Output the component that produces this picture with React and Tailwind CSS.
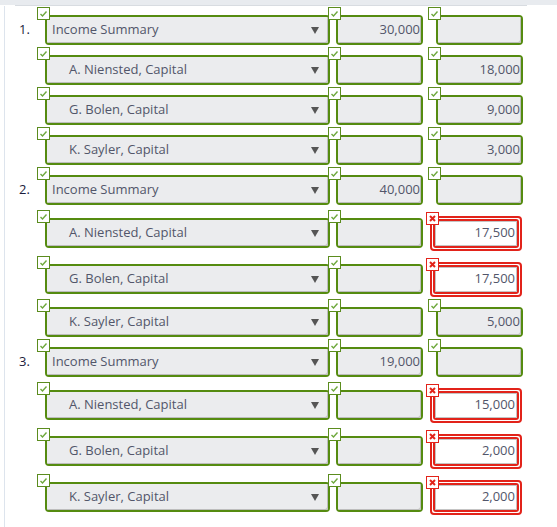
import React from 'react'

const rows = [
  { n: '1.', acct: 'Income Summary', dr: '30,000', cr: '' },
  { n: '', acct: 'A. Niensted, Capital', dr: '', cr: '18,000' },
  { n: '', acct: 'G. Bolen, Capital', dr: '', cr: '9,000' },
  { n: '', acct: 'K. Sayler, Capital', dr: '', cr: '3,000' },
  { n: '2.', acct: 'Income Summary', dr: '40,000', cr: '' },
  { n: '', acct: 'A. Niensted, Capital', dr: '', cr: '17,500', bad: true },
  { n: '', acct: 'G. Bolen, Capital', dr: '', cr: '17,500', bad: true },
  { n: '', acct: 'K. Sayler, Capital', dr: '', cr: '5,000' },
  { n: '3.', acct: 'Income Summary', dr: '19,000', cr: '' },
  { n: '', acct: 'A. Niensted, Capital', dr: '', cr: '15,000', bad: true },
  { n: '', acct: 'G. Bolen, Capital', dr: '', cr: '2,000', bad: true },
  { n: '', acct: 'K. Sayler, Capital', dr: '', cr: '2,000', bad: true },
]

function Ok({ className }) {
  return (
    <div className={`absolute z-10 w-[13px] h-[13px] border border-[#5b8c1e] bg-white ${className}`}>
      <svg width="11" height="11" viewBox="0 0 11 11" className="block">
        <polyline points="2.5,6 4.5,8 8.5,3.5" fill="none" stroke="#6ea83c" strokeWidth="1.4" />
      </svg>
    </div>
  )
}

function Bad({ className }) {
  return (
    <div className={`absolute z-10 w-[13px] h-[13px] border border-[#e2231a] bg-white ${className}`}>
      <svg width="11" height="11" viewBox="0 0 11 11" className="block">
        <path d="M3 3 L8 8 M8 3 L3 8" stroke="#e2231a" strokeWidth="2" />
      </svg>
    </div>
  )
}

function Box({ width, children, className = '' }) {
  return (
    <div className={`relative h-[30px] rounded-[4px] border-2 border-[#558b10] ${width} ${className}`}>
      <Ok className="-left-[10px] -top-[10px]" />
      <div className="h-full rounded-[2px] bg-[#ebecee] shadow-[inset_-1px_-1px_0_#bdbdbd] flex items-center">
        {children}
      </div>
    </div>
  )
}

function Wrong({ value }) {
  return (
    <div className="relative w-[92px] h-[35px] rounded-[4px] border-2 border-[#e2231a] bg-white p-px">
      <Bad className="-left-[6px] -top-[6px]" />
      <div className="h-full rounded-[3px] border-2 border-[#e2231a]">
        <div className="h-full border border-[#c4c4c4] bg-white flex items-center justify-end pr-[1px]">
          {value}
        </div>
      </div>
    </div>
  )
}

export default function App() {
  return (
    <div className="w-[557px] h-[527px] overflow-hidden bg-white relative text-[13px] text-[#52566a]" style={{ fontFamily: '"Open Sans", sans-serif' }}>
      <div className="h-[5px] bg-[#e8ebef]" />
      <div className="h-px w-[512px] ml-[15px] bg-[#d8dce1]" />
      <div className="ml-[4px] border-l border-[#dde4ed] h-full pt-[4px]">
        {rows.map((r, i) => (
          <div key={i} className={`flex items-center pl-[14px] ${r.bad ? 'h-[46px]' : 'h-[40px]'}`}>
            <div className="w-[26px] text-[#1c1c3c]">{r.n}</div>
            <Box width="w-[285px]">
              <span className={`flex-1 ${r.n ? 'pl-[5px]' : 'pl-[22px]'}`}>{r.acct}</span>
              <svg width="8" height="7" viewBox="0 0 8 7" className="mr-[9px]">
                <path d="M0 0 H8 L4 7 Z" fill="#555" />
              </svg>
            </Box>
            <Box width="w-[87px]" className="ml-[6px]">
              <span className="flex-1 text-right pr-[1px]">{r.dr}</span>
            </Box>
            <div className="ml-[7px] w-[93px]">
              {r.bad ? (
                <Wrong value={r.cr} />
              ) : (
                <Box width="w-[87px]" className="ml-[6px]">
                  <span className="flex-1 text-right pr-[1px]">{r.cr}</span>
                </Box>
              )}
            </div>
          </div>
        ))}
      </div>
    </div>
  )
}
